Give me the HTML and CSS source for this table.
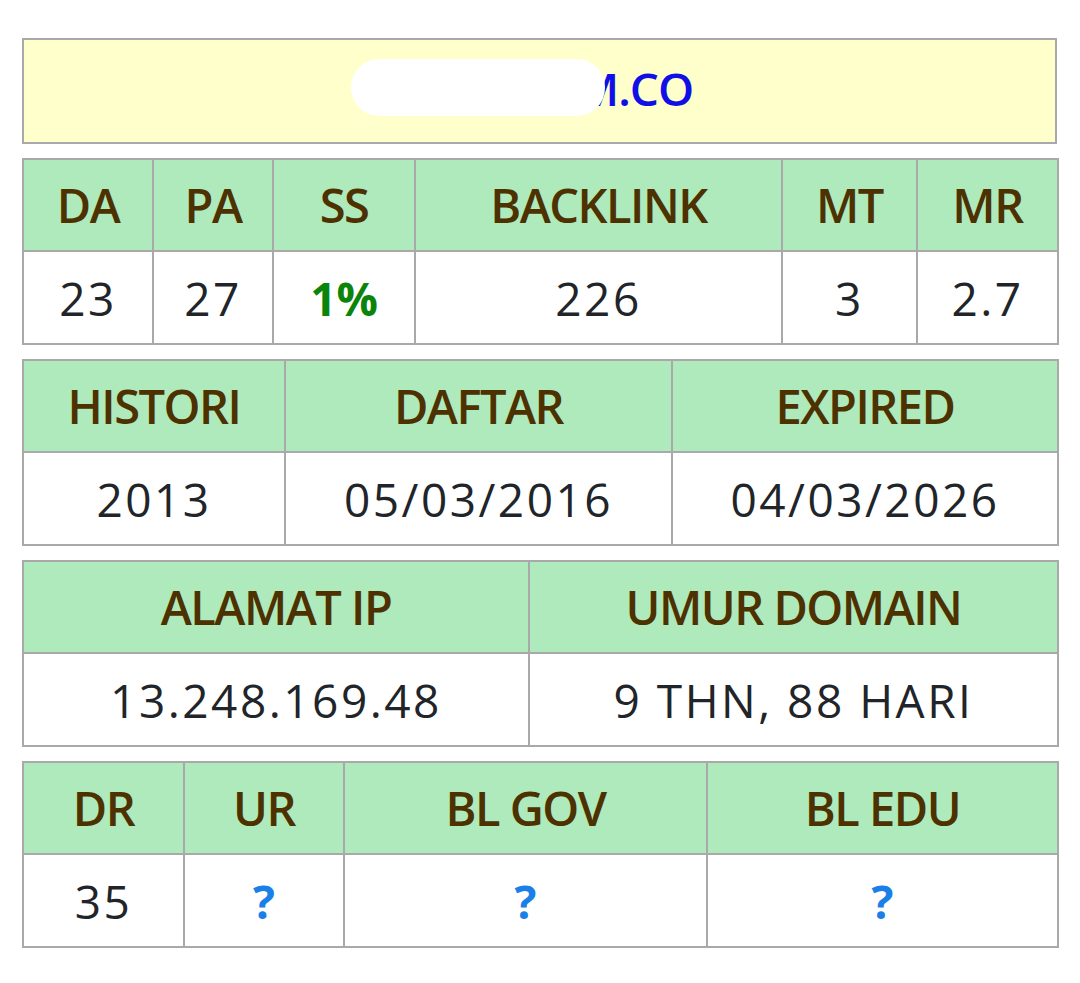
FILE: index.html
```html
<!DOCTYPE html>
<html>
<head>
<meta charset="utf-8">
<link rel="stylesheet" href="styles.css">
</head>
<body>
<div class="stack">
  <table class="tbl title-tbl">
    <tr><td class="title"><span class="domain"><span class="redact"></span>M.CO</span></td></tr>
  </table>

  <table class="tbl">
    <colgroup><col style="width:130px"><col style="width:120px"><col style="width:142px"><col style="width:367px"><col style="width:135px"><col style="width:141px"></colgroup>
    <tr class="head"><th>DA</th><th>PA</th><th>SS</th><th>BACKLINK</th><th>MT</th><th>MR</th></tr>
    <tr class="vals"><td>23</td><td>27</td><td><span class="ss">1%</span></td><td>226</td><td>3</td><td>2.7</td></tr>
  </table>

  <table class="tbl">
    <colgroup><col style="width:262px"><col style="width:387px"><col style="width:386px"></colgroup>
    <tr class="head"><th>HISTORI</th><th>DAFTAR</th><th>EXPIRED</th></tr>
    <tr class="vals"><td>2013</td><td>05/03/2016</td><td>04/03/2026</td></tr>
  </table>

  <table class="tbl">
    <colgroup><col style="width:506px"><col style="width:529px"></colgroup>
    <tr class="head"><th>ALAMAT IP</th><th>UMUR DOMAIN</th></tr>
    <tr class="vals"><td>13.248.169.48</td><td>9 THN, 88 HARI</td></tr>
  </table>

  <table class="tbl">
    <colgroup><col style="width:161px"><col style="width:160px"><col style="width:363px"><col style="width:351px"></colgroup>
    <tr class="head"><th>DR</th><th>UR</th><th>BL GOV</th><th>BL EDU</th></tr>
    <tr class="vals"><td>35</td><td><span class="q">?</span></td><td><span class="q">?</span></td><td><span class="q">?</span></td></tr>
  </table>
</div>
</body>
</html>
```

FILE: styles.css
```css
html, body {
  margin: 0;
  padding: 0;
  background: #ffffff;
}
body {
  padding: 38px 22px 0 22px;
  font-family: "Open Sans", "Noto Sans", sans-serif;
}
.stack {
  display: flex;
  flex-direction: column;
  gap: 14px;
}
.tbl {
  width: 1035px;
  table-layout: fixed;
  border-collapse: collapse;
  border: 2px solid #a9a9a9;
}
.tbl th, .tbl td {
  border: 2px solid #a9a9a9;
  padding: 0;
  text-align: center;
  vertical-align: middle;
}
.head th {
  height: 90px;
  background: #aeeabc;
  color: #4d3100;
  font-weight: 600;
  font-size: 47px;
  line-height: 47px;
  letter-spacing: -1.5px;
}
.vals td {
  height: 91px;
  background: #ffffff;
  color: #212529;
  font-weight: 400;
  font-size: 46px;
  line-height: 46px;
  letter-spacing: 2.5px;
}
.title-tbl .title {
  height: 102px;
  background: #ffffcc;
}
.domain {
  position: relative;
  display: inline-block;
  padding-left: 226px;
  margin-right: 35px;
  margin-bottom: 6px;
  color: #1010e6;
  font-weight: 600;
  font-size: 46px;
  line-height: 52px;
  letter-spacing: -1px;
}
.redact {
  position: absolute;
  left: 0;
  top: -3px;
  width: 254px;
  height: 57px;
  border-radius: 28px;
  background: #ffffff;
}
.ss {
  color: #0a850a;
  font-weight: 700;
  letter-spacing: 0;
}
.q {
  color: #1a7fe6;
  font-weight: 700;
  letter-spacing: 0;
}
```
